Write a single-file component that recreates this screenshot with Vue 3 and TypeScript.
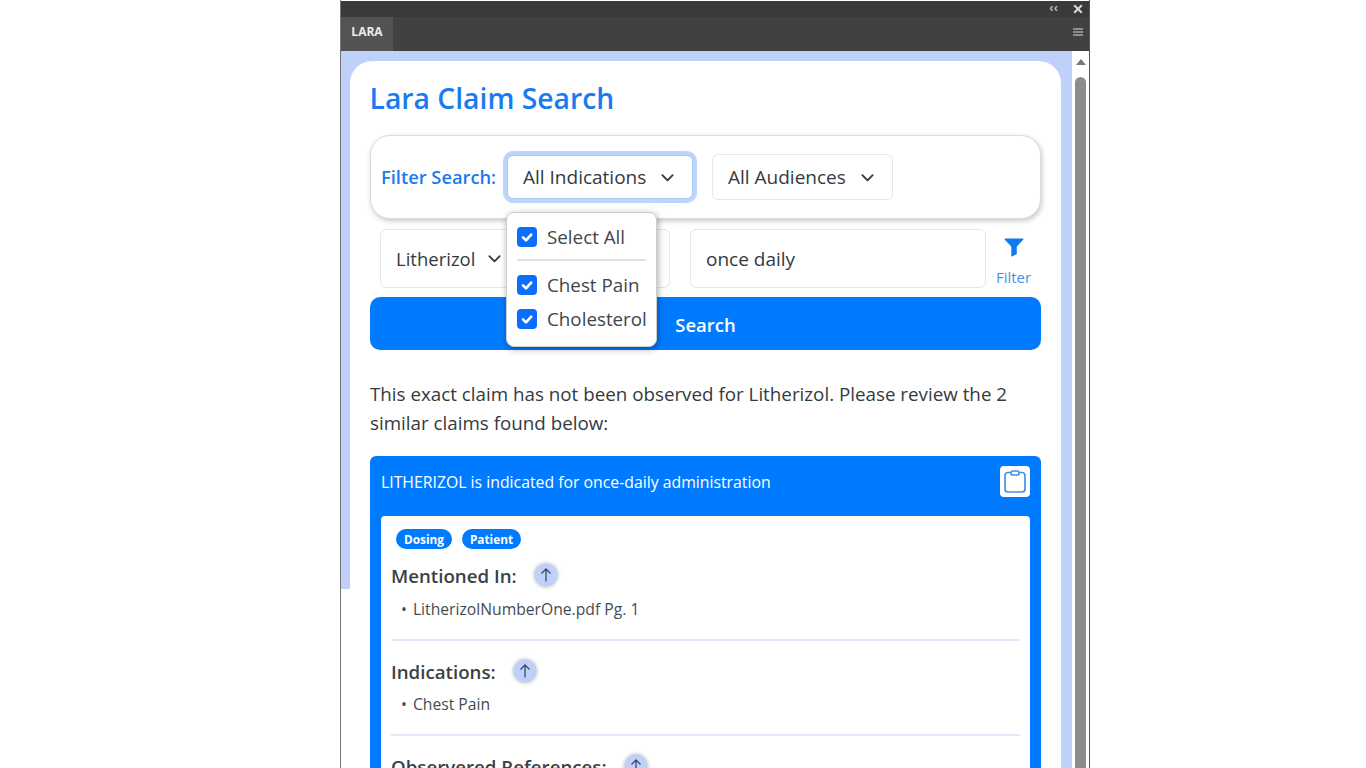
<script setup lang="ts">
const options = ['Chest Pain', 'Cholesterol']
const sections = [
  { title: 'Mentioned In:', item: 'LitherizolNumberOne.pdf Pg. 1' },
  { title: 'Indications:', item: 'Chest Pain' },
  { title: 'Observered References:', item: 'LitherizolNumberOne.pdf Pg. 1' },
]
</script>

<template>
  <div class="page">
    <div class="window">
      <div class="titlebar">
        <span class="collapse">‹‹</span>
        <svg class="close" viewBox="0 0 10 10" width="10" height="10"><path d="M1.2 1.2l7.6 7.6M8.8 1.2L1.2 8.8" stroke="#d8d8d8" stroke-width="2" fill="none" /></svg>
      </div>
      <div class="tabbar">
        <div class="tab">LARA</div>
        <div class="menu"><i></i><i></i><i></i></div>
      </div>
      <div class="body">
        <div class="main">
          <div class="card">
            <h1>Lara Claim Search</h1>
            <div class="filter-box">
              <span class="filter-label">Filter Search:</span>
              <div class="select focused">
                All Indications
                <svg class="chev" viewBox="0 0 16 16" width="15" height="15"><path d="M2.5 5.5L8 11l5.5-5.5" stroke="#343a40" stroke-width="2" fill="none" stroke-linecap="round" stroke-linejoin="round" /></svg>
              </div>
              <div class="select audiences">
                All Audiences
                <svg class="chev" viewBox="0 0 16 16" width="15" height="15"><path d="M2.5 5.5L8 11l5.5-5.5" stroke="#343a40" stroke-width="2" fill="none" stroke-linecap="round" stroke-linejoin="round" /></svg>
              </div>
              <div class="dropdown">
                <label class="check"><span class="box"><svg viewBox="0 0 20 20" width="20" height="20"><path d="M6 10.3l3 3 5.2-5.6" stroke="#fff" stroke-width="2.6" fill="none" stroke-linecap="round" stroke-linejoin="round" /></svg></span>Select All</label>
                <div class="drop-rule"></div>
                <label v-for="o in options" :key="o" class="check"><span class="box"><svg viewBox="0 0 20 20" width="20" height="20"><path d="M6 10.3l3 3 5.2-5.6" stroke="#fff" stroke-width="2.6" fill="none" stroke-linecap="round" stroke-linejoin="round" /></svg></span>{{ o }}</label>
              </div>
            </div>
            <div class="query-row">
              <div class="select product">
                Litherizol
                <svg class="chev" viewBox="0 0 16 16" width="15" height="15"><path d="M2.5 5.5L8 11l5.5-5.5" stroke="#343a40" stroke-width="2" fill="none" stroke-linecap="round" stroke-linejoin="round" /></svg>
              </div>
              <div class="query-input">once daily</div>
              <div class="filter-btn">
                <svg viewBox="0 0 20 20" width="20" height="20"><path d="M1 1.500h18a.6.6 0 0 1 .4 1L12.800 9.500V16.500a1 1 0 0 1-.5.800l-3.800 2a.7.7 0 0 1-1.200-.7V9.500L.6 2.500A.6.6 0 0 1 1 1.500z" fill="#0d7bf2" /></svg>
                <span>Filter</span>
              </div>
            </div>
            <button class="search">Search</button>
            <p class="message">This exact claim has not been observed for Litherizol. Please review the 2 similar claims found below:</p>
            <div class="result">
              <div class="result-head">
                <span>LITHERIZOL is indicated for once-daily administration</span>
                <span class="copy">
                  <svg viewBox="0 0 22 23" width="22" height="23"><path d="M6.500 2.500H4A3 3 0 0 0 1 5.500V19a3 3 0 0 0 3 3h14a3 3 0 0 0 3-3V5.500a3 3 0 0 0-3-3h-2.500" stroke="#4a90e2" stroke-width="1.700" fill="none" /><rect x="7" y="1" width="8" height="4" rx="1.800" stroke="#4a90e2" stroke-width="1.700" fill="none" /></svg>
                </span>
              </div>
              <div class="result-body">
                <div class="tags"><span>Dosing</span><span>Patient</span></div>
                <div v-for="s in sections" :key="s.title" class="section">
                  <div class="section-head">
                    <span>{{ s.title }}</span>
                    <span class="arrow"><svg viewBox="0 0 16 16" width="16" height="16"><path d="M8 14.500V2M3.500 6.500L8 2l4.500 4.500" stroke="#3d4a63" stroke-width="1.300" fill="none" /></svg></span>
                  </div>
                  <div class="section-item"><span class="dot">•</span>{{ s.item }}</div>
                </div>
              </div>
            </div>
          </div>
        </div>
        <div class="scrollbar">
          <div class="up"></div>
          <div class="thumb"></div>
        </div>
      </div>
    </div>
  </div>
</template>

<style>
html, body { margin: 0; background: #fff; overflow: hidden; }
</style>

<style scoped>
.page {
  height: 768px;
  overflow: hidden;
  display: flex;
  justify-content: flex-start;
  padding-left: 340px;
  font-family: "Open Sans", "Noto Sans", sans-serif;
  color: #343a40;
}
.window {
  width: 750px;
  height: 768px;
  box-sizing: border-box;
  border-left: 1px solid #777;
  border-right: 1px solid #555;
  display: flex;
  flex-direction: column;
  overflow: hidden;
}
.titlebar {
  height: 16px;
  margin-top: 1px;
  background: #3a3a3a;
  display: flex;
  justify-content: flex-end;
  align-items: center;
  gap: 15px;
  padding-right: 6px;
  flex: none;
}
.collapse { color: #bbb; font: 700 13px/13px "Liberation Sans", sans-serif; margin-top: -3px; letter-spacing: 0; }
.tabbar {
  height: 34px;
  background: #414141;
  display: flex;
  justify-content: space-between;
  flex: none;
}
.tab {
  width: 52px;
  background: #535353;
  color: #ececec;
  font-size: 12px;
  font-weight: 700;
  text-align: center;
  line-height: 29px;
}
.menu { width: 10px; margin: 11px 6px 0 0; height: 8px; display: flex; flex-direction: column; justify-content: space-between; }
.menu i { display: block; height: 2px; background: #8c8c8c; }
.body { flex: 1; display: flex; min-height: 0; }
.main {
  width: 731px;
  padding: 10px 11px 0 9px;
  box-sizing: border-box;
  background: linear-gradient(#fff, #fff) left bottom / 9px 179px no-repeat, #bfd0fb;
}
.card {
  background: #fff;
  border-radius: 22px 22px 0 0;
  height: 900px;
  padding: 17px 20px 0;
  box-sizing: border-box;
}
h1 {
  margin: 0 0 0 -0.5px;
  font-size: 28.300px;
  line-height: 40px;
  font-weight: 600;
  color: #1a7bf0;
}
.filter-box {
  position: relative;
  margin-top: 17px;
  height: 84px;
  box-sizing: border-box;
  border: 1px solid #dcdcdc;
  border-radius: 20px;
  box-shadow: 1px 2px 5px rgba(0,0,0,.22);
  display: flex;
  align-items: center;
  padding: 0 10px;
  background: #fff;
}
.filter-label { color: #1a7bf0; font-size: 18.300px; font-weight: 600; width: 126px; flex: none; white-space: nowrap; margin-top: -1px; }
.select {
  box-sizing: border-box;
  border: 1px solid #e3e6ea;
  border-radius: 6px;
  height: 46px;
  display: flex;
  align-items: center;
  justify-content: space-between;
  font-size: 19px;
  padding: 0 17px 0 15px;
  white-space: nowrap;
  background: #fff;
}
.focused { width: 186px; height: 44px; border-color: #a9c8f5; box-shadow: 0 0 0 4px #bcd5fb; margin-top: 0; }
.audiences { width: 181px; margin-left: 19px; }
.dropdown {
  position: absolute;
  left: 135px;
  top: 76px;
  width: 151px;
  height: 135px;
  box-sizing: border-box;
  background: #fff;
  border: 1px solid #cfcfcf;
  border-radius: 8px;
  box-shadow: 1px 2px 7px rgba(0,0,0,.35);
  padding: 7px 10px 0;
  z-index: 2;
}
.check { display: flex; align-items: center; gap: 10px; height: 34px; font-size: 18.800px; white-space: nowrap; color: #3f454b; }
.box { width: 20px; height: 20px; background: #0d6efd; border-radius: 4px; flex: none; display: flex; }
.drop-rule { height: 2px; background: #e0e0e0; margin: 5px 0 7px; }
.query-row { display: flex; margin-top: 10px; height: 60px; padding-left: 10px; align-items: flex-start; }
.product { width: 290px; height: 59px; justify-content: flex-start; gap: 12px; font-size: 18.500px; }
.query-input {
  margin-left: 20px;
  width: 296px;
  height: 59px;
  box-sizing: border-box;
  border: 1px solid #e3e6ea;
  border-radius: 6px;
  display: flex;
  align-items: center;
  padding: 1px 16px 0 15px;
  font-size: 19px;
}
.filter-btn {
  width: 55px;
  display: flex;
  flex-direction: column;
  align-items: center;
  color: #4a90e2;
  font-size: 15px;
  padding-top: 8px;
  gap: 11px;
  line-height: 18px;
}
.search {
  display: block;
  width: 100%;
  height: 53px;
  margin-top: 8px;
  border: 0;
  padding: 1px 0 0;
  border-radius: 10px;
  background: #007bff;
  color: #fff;
  font: 600 18.500px "Open Sans", sans-serif;
}
.message { margin: 30px 0 18px; font-size: 18.800px; line-height: 29px; color: #343a40; }
.result {
  background: #007bff;
  border-radius: 6px 6px 0 0;
  padding: 0 11px;
}
.result-head {
  height: 60px;
  box-sizing: border-box;
  padding-bottom: 8px;
  display: flex;
  align-items: center;
  justify-content: space-between;
  color: #fff;
  font-size: 15.800px;
}
.copy { width: 30px; height: 31px; background: #fff; border-radius: 4px; display: flex; align-items: center; justify-content: center; margin-top: -2px; }
.result-body { background: #fff; border-radius: 4px; padding: 13px 10px 0; }
.tags { display: flex; gap: 10px; padding-left: 5px; }
.tags span { background: #007bff; color: #fff; font-size: 11.800px; font-weight: 700; border-radius: 10px; height: 20px; line-height: 20px; padding: 0 8px; }
.section { height: 95px; box-sizing: border-box; border-bottom: 2px solid #dfe9fb; padding-top: 4px; }
.section .section-item { margin-top: 4px; }
.tags + .section { height: 92px; padding-top: 0; }
.tags + .section .section-item { margin-top: 5px; }
.section-head { display: flex; align-items: center; gap: 18px; font-size: 18.700px; font-weight: 600; height: 36px; padding-top: 8px; color: #3a3f45; }
.arrow { width: 22px; height: 22px; border-radius: 50%; background: #bfd0fb; box-shadow: 0 0 4px rgba(50,60,110,.55); display: flex; align-items: center; justify-content: center; }
.section-item { font-size: 15.700px; padding-left: 10px; color: #454b52; }
.dot { margin-right: 6px; }
.scrollbar { flex: 1; background: #fff; position: relative; padding-top: 8px; display: flex; flex-direction: column; align-items: center; }
.up { width: 0; height: 0; border-left: 5px solid transparent; border-right: 5px solid transparent; border-bottom: 6px solid #777; }
.thumb { width: 11px; flex: 1; background: #8c8c8c; border-radius: 6px 6px 0 0; margin-top: 12px; }
</style>
